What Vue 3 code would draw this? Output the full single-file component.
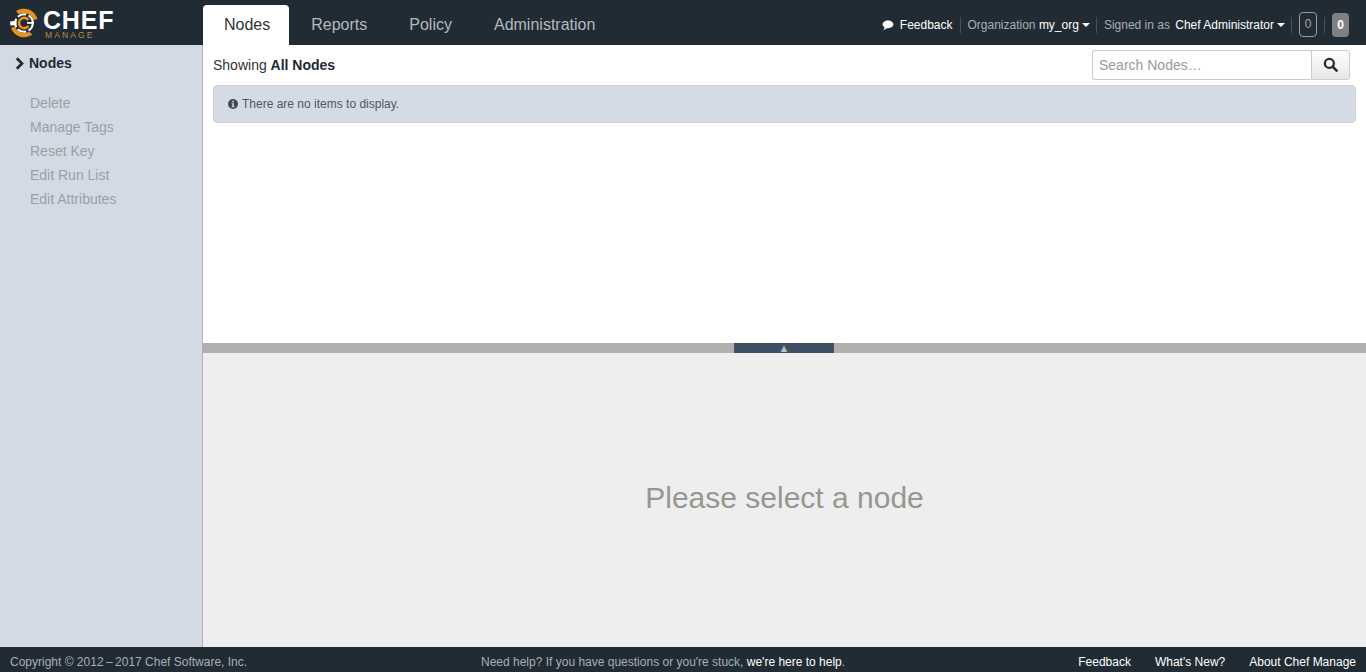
<script setup>
const tabs = [
  { name: 'Nodes', active: true },
  { name: 'Reports' },
  { name: 'Policy' },
  { name: 'Administration' }
]
const actions = ['Delete', 'Manage Tags', 'Reset Key', 'Edit Run List', 'Edit Attributes']
</script>

<template>
  <div class="page">
    <header class="top">
      <div class="brand">
        <svg class="mark" viewBox="0 0 30 30" width="30" height="30">
          <path d="M7 3.200 A14 14 0 0 1 28.500 11 L24.500 12 A10 10 0 0 0 10 6.300 Z" fill="#e8921e" />
          <path d="M23.500 26.500 A14 14 0 0 1 2 20 L6 18.500 A10 10 0 0 0 20 23.700 Z" fill="#e8921e" />
          <circle cx="15" cy="15" r="8.800" fill="none" stroke="#fff" stroke-width="2" stroke-dasharray="9 2.500" />
          <path d="M19.500 12 A5.200 5.200 0 1 0 19.500 18" fill="none" stroke="#e8921e" stroke-width="2.600" />
          <path d="M1 13.500 L7.500 12.800 L7.500 17.200 L1.500 17.500 Z" fill="#fff" />
          <path d="M18 14 L25 14 L25 15.800 L18 15.800 Z" fill="#fff" />
        </svg>
        <div class="wordmark">
          <span class="chef">CHEF</span>
          <span class="manage">MANAGE</span>
        </div>
      </div>
      <nav class="tabs">
        <a v-for="t in tabs" :key="t.name" class="tab" :class="{ active: t.active }">{{ t.name }}</a>
      </nav>
      <div class="user">
        <span class="cell">
          <svg class="bubble" viewBox="0 0 14 12" width="12" height="10">
            <path d="M7 .5C3.300 .5 .5 2.600 .5 5.200c0 1.500 1 2.900 2.500 3.700C2.800 10 2.200 11 1.200 11.600c1.800 0 3.300-.7 4.400-1.800.5.1.9.1 1.400.1 3.700 0 6.500-2.100 6.500-4.700S10.700 .5 7 .5z" fill="#fff" />
          </svg>
          <b>Feedback</b>
        </span>
        <span class="cell org">Organization <b>my_org</b><i class="caret"></i></span>
        <span class="cell signed">Signed in as <b class="who">Chef Administrator</b><i class="caret"></i></span>
        <span class="cell"><span class="count outline">0</span></span>
        <span class="cell last"><span class="count filled">0</span></span>
      </div>
    </header>

    <div class="body">
      <aside class="side">
        <div class="side-title">
          <svg viewBox="0 0 10 14" width="9" height="13">
            <path d="M2 1.200 L7.800 7 L2 12.800" fill="none" stroke="#23292f" stroke-width="3" />
          </svg>
          <span>Nodes</span>
        </div>
        <ul class="actions">
          <li v-for="a in actions" :key="a">{{ a }}</li>
        </ul>
      </aside>

      <main class="main">
        <section class="upper">
          <div class="toolbar">
            <div class="showing">Showing <b>All Nodes</b></div>
            <div class="search">
              <input class="search-input" placeholder="Search Nodes…" />
              <button class="search-btn" aria-label="Search">
                <svg viewBox="0 0 16 16" width="15" height="15">
                  <circle cx="6.800" cy="6.800" r="4.800" fill="none" stroke="#23292f" stroke-width="2.400" />
                  <path d="M10.300 10.300 L14.500 14.500" stroke="#23292f" stroke-width="2.800" stroke-linecap="round" />
                </svg>
              </button>
            </div>
          </div>
          <div class="notice">
            <svg viewBox="0 0 12 12" width="10" height="10">
              <circle cx="6" cy="6" r="6" fill="#3f4a55" />
              <rect x="5" y="2.200" width="2" height="1.700" fill="#d5dbe4" />
              <path d="M4.400 5h2.600v3.800h.8v1H4.400v-1h.8V6h-.8z" fill="#d5dbe4" />
            </svg>
            There are no items to display.
          </div>
        </section>
        <div class="divider"><span class="grip">▲</span></div>
        <section class="lower">Please select a node</section>
      </main>
    </div>

    <footer class="foot">
      <span class="copy">Copyright © 2012&thinsp;–&thinsp;2017 Chef Software, Inc.</span>
      <span class="help">Need help? If you have questions or you're stuck, <b>we're here to help</b>.</span>
      <span class="links"><b>Feedback</b><b>What's New?</b><b>About Chef Manage</b></span>
    </footer>
  </div>
</template>

<style>
html, body { margin: 0; padding: 0; overflow: hidden; }
</style>

<style scoped>
.page {
  width: 1366px;
  height: 672px;
  display: flex;
  flex-direction: column;
  font-family: "Liberation Sans", Arial, sans-serif;
  color: #23292f;
  overflow: hidden;
}
b { font-weight: 400; color: #fff; }

.top {
  height: 45px;
  flex: none;
  background: #212b34;
  display: flex;
  align-items: flex-end;
}
.brand {
  width: 203px;
  height: 45px;
  flex: none;
  display: flex;
  align-items: center;
  box-sizing: border-box;
  padding-left: 9px;
}
.mark { flex: none; margin-top: 1px; }
.wordmark { display: flex; flex-direction: column; margin-left: 4px; margin-top: 5px; }
.chef {
  font-size: 25px;
  line-height: 21px;
  font-weight: 700;
  color: #fff;
  letter-spacing: 0.8px;
}
.manage {
  font-size: 8.500px;
  line-height: 9px;
  color: #b98a45;
  letter-spacing: 2.100px;
  margin-left: 2px;
}
.tabs { display: flex; height: 40px; }
.tab {
  font-size: 16px;
  line-height: 40px;
  padding: 0 21px;
  color: #b5b9bd;
  border-radius: 4px 4px 0 0;
}
.tab.active { background: #fff; color: #333; padding: 0 19px 0 21px; margin-right: 1px; }

.user {
  margin-left: auto;
  height: 45px;
  box-sizing: border-box;
  padding: 4px 17px 0 0;
  display: flex;
  align-items: center;
  font-size: 12px;
  color: #a9afb5;
}
.cell {
  display: flex;
  align-items: center;
  height: 16px;
  padding: 0 7px;
  border-right: 1px solid #47505a;
  white-space: pre;
}
.cell.org { padding-right: 6px; }
.cell.signed { padding-right: 6px; }
.who { margin-left: 2px; }
.cell.last { border-right: 0; padding-right: 0; }
.bubble { margin-right: 6px; }
.caret {
  width: 0;
  height: 0;
  margin-left: 3px;
  border-left: 4px solid transparent;
  border-right: 4px solid transparent;
  border-top: 4px solid #fff;
}
.count {
  display: block;
  box-sizing: border-box;
  width: 18px;
  height: 25px;
  line-height: 23px;
  text-align: center;
  border-radius: 4px;
  font-size: 12px;
}
.count.outline { border: 1px solid #9b9b9b; color: #a5a5a5; }
.count.filled { background: #808080; color: #fff; font-weight: 700; height: 24px; line-height: 24px; margin-top: 1px; width: 17px; }

.body { flex: 1; display: flex; min-height: 0; }
.side {
  width: 203px;
  flex: none;
  box-sizing: border-box;
  background: #d4dae4;
  border-right: 1px solid #aeb2b8;
  padding: 11px 0 0 15px;
}
.side-title {
  display: flex;
  align-items: center;
  gap: 5px;
  font-size: 14px;
  line-height: 14px;
  font-weight: 700;
  height: 14px;
}
.actions {
  list-style: none;
  margin: 21px 0 0;
  padding: 0 0 0 15px;
  font-size: 14px;
  line-height: 24px;
  color: #9a9fa6;
}

.main { flex: 1; display: flex; flex-direction: column; min-width: 0; }
.upper { height: 298px; flex: none; box-sizing: border-box; padding: 5px 10px 0; background: #fff; }
.toolbar { display: flex; align-items: center; justify-content: space-between; height: 30px; padding-right: 6px; }
.showing { font-size: 14px; color: #333; }
.showing b { font-weight: 700; color: #23292f; }
.search { display: flex; height: 30px; }
.search-input {
  width: 219px;
  box-sizing: border-box;
  height: 30px;
  border: 1px solid #ccc;
  border-right: 0;
  border-radius: 3px 0 0 3px;
  padding: 0 6px;
  font: 14px "Liberation Sans", Arial, sans-serif;
  outline: none;
}
.search-input::placeholder { color: #999; opacity: 1; }
.search-btn {
  width: 39px;
  height: 30px;
  box-sizing: border-box;
  padding: 2px 0 0;
  border: 1px solid #ccc;
  border-radius: 0 3px 3px 0;
  background: linear-gradient(#fff, #e6e6e6);
}
.notice {
  margin-top: 5px;
  height: 38px;
  box-sizing: border-box;
  background: #d5dbe4;
  border: 1px solid #cbd1db;
  border-radius: 4px;
  padding-left: 14px;
  display: flex;
  align-items: center;
  gap: 4px;
  font-size: 12px;
  color: #4e5761;
}
.divider {
  height: 10px;
  flex: none;
  background: #b0b0b0;
  display: flex;
  justify-content: center;
  padding-right: 1px;
}
.grip {
  width: 100px;
  height: 10px;
  background: #3f4f63;
  color: #b9bec5;
  font-size: 11px;
  line-height: 10px;
  text-align: center;
  overflow: hidden;
}
.lower {
  flex: 1;
  background: #eeeeee;
  display: flex;
  align-items: center;
  justify-content: center;
  font-size: 30px;
  color: #999590;
  padding-bottom: 5px;
  box-sizing: border-box;
}

.foot {
  height: 25px;
  flex: none;
  box-sizing: border-box;
  background: #212b34;
  display: flex;
  align-items: center;
  justify-content: space-between;
  font-size: 12px;
  color: #a9afb5;
  padding: 4px 10px 0;
  position: relative;
}
.help { position: absolute; left: 481px; }
.links { display: flex; gap: 24px; }
</style>
